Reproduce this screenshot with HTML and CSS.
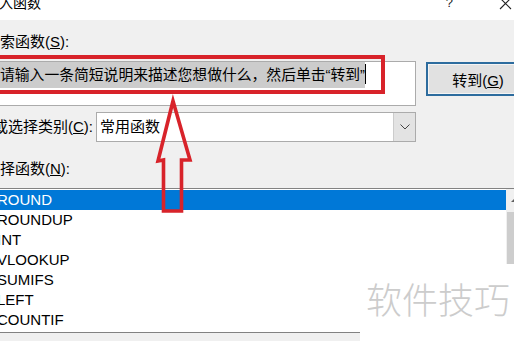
FILE: index.html
```html
<!DOCTYPE html>
<html lang="zh-CN">
<head>
    <meta charset="UTF-8">
    <meta name="viewport" content="width=device-width, initial-scale=1.0">
    <title>插入函数</title>
    <link rel="stylesheet" href="styles.css">
</head>
<body>

    <!-- Janela do diálogo -->
    <div class="dialog">
        <div class="titlebar">
            <span class="title">插入函数</span>
            <span class="help">?</span>
            <svg class="close" width="13" height="13" viewBox="0 0 13 13">
                <path d="M1 1 L12 12 M12 1 L1 12" stroke="#222" stroke-width="1.1" fill="none"/>
            </svg>
        </div>

        <div class="content">
            <div class="label label-search">搜索函数(<u>S</u>):</div>

            <div class="search-row">
                <div class="search-box">
                    <span class="hint">请输入一条简短说明来描述您想做什么，然后单击“转到”</span><span class="caret"></span>
                </div>
                <button class="btn-go">转到(<u>G</u>)</button>
            </div>

            <div class="category-row">
                <div class="label category-label">或选择类别(<u>C</u>):</div>
                <div class="select">
                    <span class="select-value">常用函数</span>
                    <span class="select-btn">
                        <svg width="10" height="6" viewBox="0 0 10 6">
                            <path d="M0.5 0.5 L5 5 L9.5 0.5" stroke="#444" stroke-width="1" fill="none"/>
                        </svg>
                    </span>
                </div>
            </div>

            <div class="label label-list">选择函数(<u>N</u>):</div>

            <div class="func-list">
                <ul class="func-items">
                    <li class="active">ROUND</li>
                    <li>ROUNDUP</li>
                    <li>INT</li>
                    <li>VLOOKUP</li>
                    <li>SUMIFS</li>
                    <li>LEFT</li>
                    <li>COUNTIF</li>
                </ul>
                <div class="scrollbar">
                    <span class="scroll-up"></span>
                    <span class="thumb"></span>
                </div>
            </div>
        </div>
    </div>

    <!-- Anotações por cima -->
    <div class="annot-box"></div>
    <svg class="annot-arrow" width="514" height="341" viewBox="0 0 514 341">
        <polygon points="173,101 190,160 181.5,160 181.5,211 163.5,211 163.5,160 158,161"
                 fill="none" stroke="#d8232a" stroke-width="3.6" stroke-linejoin="miter"/>
    </svg>

    <div class="watermark"><span>软件技巧</span></div>

</body>
</html>
```

FILE: styles.css
```css
/* Estilos gerais */
body {
    margin: 0;
    width: 514px;
    height: 341px;
    overflow: hidden;
    position: relative;
    background: #f0f0f0;
    color: #000;
    font-family: "Liberation Sans", "Noto Sans CJK SC", sans-serif;
    font-size: 15px;
}

.dialog {
    margin-left: -24px;
    width: 538px;
}

/* Barra de título */
.titlebar {
    height: 20px;
    background: #fff;
    display: flex;
    align-items: flex-start;
}

.title {
    flex: 1;
    margin-top: -4px;
    padding-left: 9px;
    font-size: 14px;
    line-height: 15px;
    white-space: nowrap;
}

.help {
    margin-top: -4px;
    margin-right: 46px;
    font-size: 13px;
    line-height: 14px;
    color: #222;
}

.close {
    margin-top: -3px;
    margin-right: 2px;
}

/* Rótulos */
.label {
    line-height: 18px;
    white-space: nowrap;
}

.label-search {
    margin-top: 13px;
    padding-left: 9px;
}

.label-list {
    margin-top: 18px;
    padding-left: 9px;
}

/* Caixa de pesquisa */
.search-row {
    display: flex;
    align-items: flex-start;
    margin-top: 10px;
}

.search-box {
    flex-shrink: 0;
    width: 440px;
    height: 45px;
    box-sizing: border-box;
    border: 1px solid #ababab;
    background: #fff;
    padding: 0 0 0 23px;
    white-space: nowrap;
    font-size: 14.8px;
}

.hint {
    display: inline-block;
    background: #cccccc;
    line-height: 26px;
    vertical-align: top;
}

.caret {
    display: inline-block;
    width: 1px;
    height: 20px;
    margin-top: 2px;
    background: #000;
    vertical-align: top;
}

.btn-go {
    flex-shrink: 0;
    margin-left: 10px;
    margin-top: 1px;
    width: 104px;
    height: 34px;
    border: 2px solid #2d6c9e;
    background: #e1e1e1;
    box-shadow: inset 0 0 0 1px #f4f4f4;
    font-family: inherit;
    font-size: 15px;
    color: #000;
    padding: 0;
}

/* Categoria */
.category-row {
    display: flex;
    align-items: center;
    margin-top: 6px;
}

.category-label {
    flex-shrink: 0;
    width: 120px;
    box-sizing: border-box;
    padding-left: 17px;
}

.select {
    flex-shrink: 0;
    width: 320px;
    height: 30px;
    box-sizing: border-box;
    border: 1px solid #ababab;
    background: #fff;
    display: flex;
}

.select-value {
    flex: 1;
    padding-left: 3px;
    line-height: 28px;
}

.select-btn {
    width: 21px;
    background: #e3e3e3;
    border-left: 1px solid #cccccc;
    display: flex;
    align-items: center;
    justify-content: center;
}

/* Lista de funções */
.func-list {
    margin-top: 10px;
    width: 547px;
    display: flex;
    background: #fff;
    border-top: 1px solid #828282;
    border-bottom: 1px solid #828282;
}

.func-items {
    flex: 1;
    list-style: none;
    margin: 0;
    padding: 1px 0 0;
}

.func-items li {
    height: 20px;
    line-height: 20px;
    padding-left: 21px;
    font-size: 15px;
}

.func-items li.active {
    background: #0078d7;
    color: #fff;
}

.scrollbar {
    flex-shrink: 0;
    width: 17px;
    background: #f0f0f0;
    display: flex;
    flex-direction: column;
    align-items: center;
}

.scroll-up {
    margin-top: 9px;
    width: 0;
    height: 0;
    border-left: 4px solid transparent;
    border-right: 4px solid transparent;
    border-bottom: 4px solid #606060;
}

.thumb {
    margin-top: 10px;
    width: 15px;
    height: 120px;
    background: #cdcdcd;
}

/* Anotações */
.annot-box {
    position: absolute;
    left: -10px;
    top: 55px;
    width: 395px;
    height: 39px;
    box-sizing: border-box;
    border: 4px solid #d8232a;
}

.annot-arrow {
    position: absolute;
    left: 0;
    top: 0;
    pointer-events: none;
}

.watermark {
    position: absolute;
    left: 360px;
    top: 264px;
    right: 0;
    bottom: 0;
    background: #fff;
}

.watermark span {
    display: block;
    padding: 16px 0 0 6px;
    font-size: 36px;
    line-height: 36px;
    color: #cccccc;
    font-family: "Noto Sans CJK SC", sans-serif;
    font-weight: 300;
}
```
